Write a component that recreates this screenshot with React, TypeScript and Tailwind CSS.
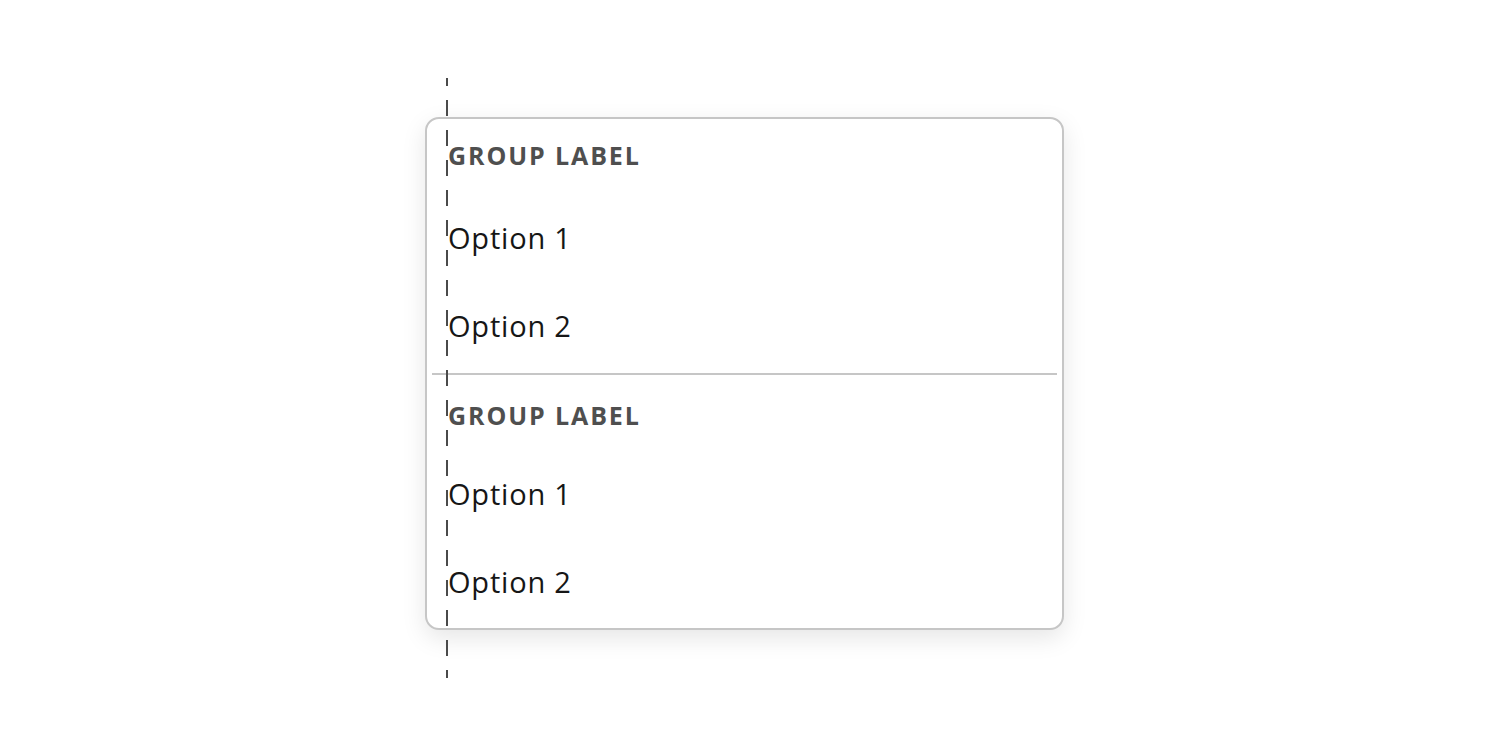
import React from 'react';

const groups = [
    { label: 'GROUP LABEL', options: ['Option 1', 'Option 2'] },
    { label: 'GROUP LABEL', options: ['Option 1', 'Option 2'] },
];

const OptionRow: React.FC<{ text: string }> = ({ text }) => (
    <div className="h-[88px] flex items-center pl-[21px] pb-[6px] text-[29px] text-[#161616] leading-none tracking-[0.8px]">
        {text}
    </div>
);

const App: React.FC = () => {
    return (
        <div className="w-[1488px] h-[745px] bg-white relative" style={{ fontFamily: '"Open Sans", "Noto Sans", sans-serif' }}>
            <div className="pt-[117px] pl-[425px]">
                <div className="w-[639px] border-2 border-[#c6c6c6] rounded-[14px] bg-white shadow-[0_8px_24px_rgba(0,0,0,0.1)]">
                    {groups.map((group, gi) => (
                        <div key={gi}>
                            {gi > 0 && <div className="mx-[5px] mt-[1px] h-[2px] bg-[#c6c6c6]" />}
                            <div
                                className={`${gi === 0 ? 'h-[77px] pb-[4px]' : 'h-[77px] pt-[3px]'} flex items-center pl-[21px] text-[25px] font-bold text-[#4f4f4f] leading-none tracking-[1.9px]`}
                            >
                                {group.label}
                            </div>
                            {group.options.map((opt, oi) => (
                                <OptionRow key={oi} text={opt} />
                            ))}
                        </div>
                    ))}
                </div>
            </div>

            {/* alignment guide */}
            <svg className="absolute left-[446px] top-[78px]" width="2" height="600">
                <line x1="1" y1="0" x2="1" y2="600" stroke="#4a4a4a" strokeWidth="2" strokeDasharray="16 14" strokeDashoffset="8" />
            </svg>
        </div>
    );
};

export default App;
